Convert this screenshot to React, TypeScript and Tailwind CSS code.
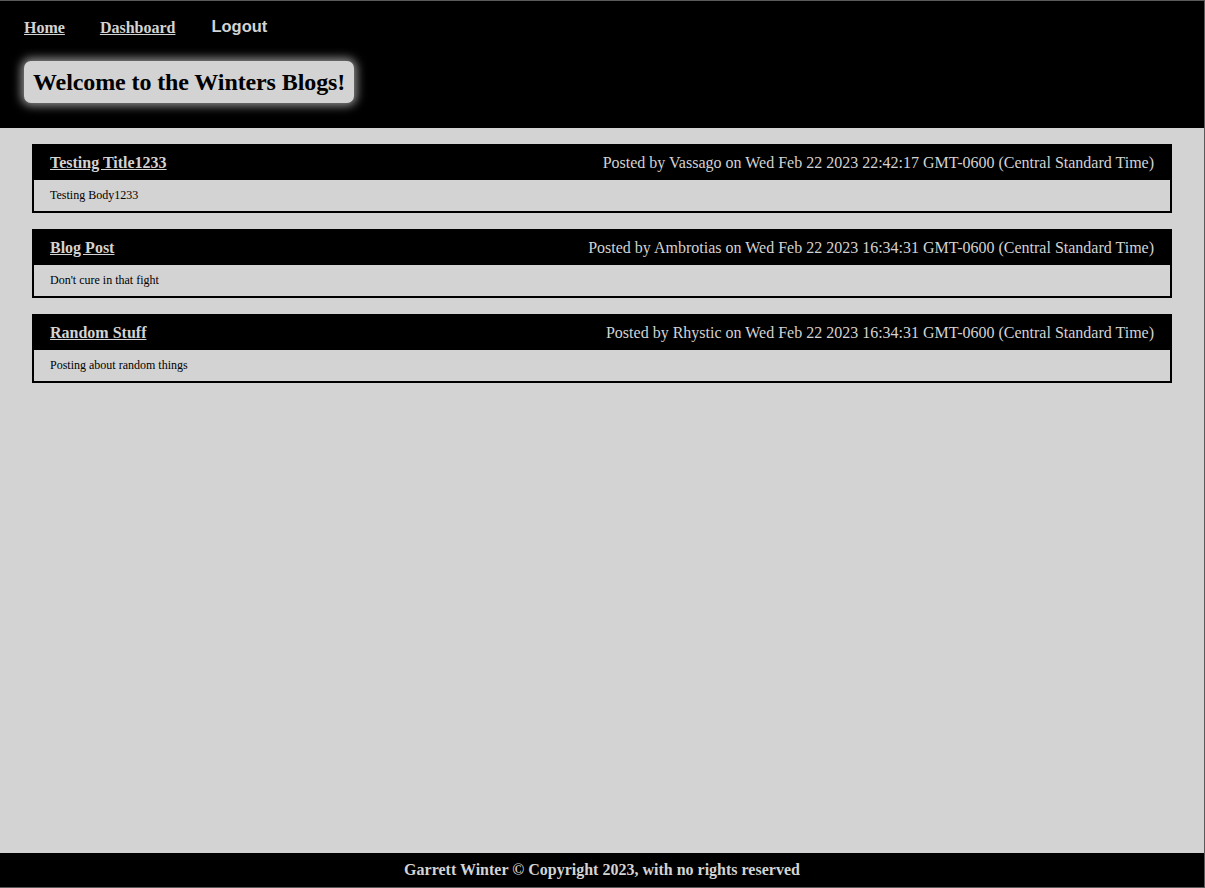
const posts = [
  {
    title: 'Testing Title1233',
    author: 'Vassago',
    date: 'Wed Feb 22 2023 22:42:17 GMT-0600 (Central Standard Time)',
    body: 'Testing Body1233',
  },
  {
    title: 'Blog Post',
    author: 'Ambrotias',
    date: 'Wed Feb 22 2023 16:34:31 GMT-0600 (Central Standard Time)',
    body: "Don't cure in that fight",
  },
  {
    title: 'Random Stuff',
    author: 'Rhystic',
    date: 'Wed Feb 22 2023 16:34:31 GMT-0600 (Central Standard Time)',
    body: 'Posting about random things',
  },
]

const serif = "font-['Liberation_Serif','Times_New_Roman',serif]"

export default function App() {
  return (
    <div className={`${serif} min-h-screen flex flex-col bg-[#d3d3d3] border-t border-r border-b border-[#5a5a5a]`}>
      {/* Header */}
      <header className="bg-black px-6 pt-[16px] pb-[25px]">
        <nav className="flex items-baseline gap-[35px] text-[#d3d3d3]">
          <a href="#" className="text-base/5 font-bold underline">Home</a>
          <a href="#" className="text-base/5 font-bold underline">Dashboard</a>
          <button className="ml-px -translate-y-px font-['Liberation_Sans',Arial,sans-serif] text-[16.5px]/5 font-bold text-[#d3d3d3]">
            Logout
          </button>
        </nav>
        <div className="mt-[23px] inline-block bg-[#d3d3d3] rounded-[7px] px-[9px] py-[7px] shadow-[0_0_10px_3px_rgba(255,255,255,0.55)]">
          <h1 className="text-2xl/7 font-bold tracking-[-0.1px] text-black">Welcome to the Winters Blogs!</h1>
        </div>
      </header>

      {/* Posts */}
      <main className="flex-1 px-8 pt-4 flex flex-col gap-4">
        {posts.map((p) => (
          <article key={p.title} className="border-2 border-black">
            <div className="bg-black flex items-center justify-between px-4 py-2 text-[#d3d3d3]">
              <a href="#" className="text-base/[18px] font-bold underline">{p.title}</a>
              <span className="text-base/[18px]">Posted by {p.author} on {p.date}</span>
            </div>
            <div className="px-4 py-2 text-xs/[15px] text-black">{p.body}</div>
          </article>
        ))}
      </main>

      {/* Footer */}
      <footer className="bg-black py-2 text-center text-base/[18px] font-bold text-[#d3d3d3]">
        Garrett Winter © Copyright 2023, with no rights reserved
      </footer>
    </div>
  )
}
